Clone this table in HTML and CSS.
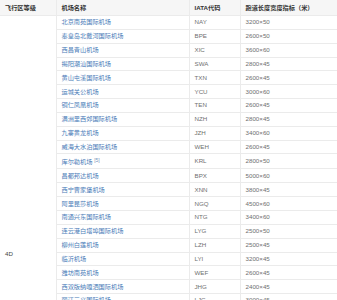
FILE: index.html
```
<!DOCTYPE html>
<html lang="zh-CN">

<head>
    <meta charset="UTF-8">
    <meta name="viewport" content="width=device-width, initial-scale=1.0">
    <title>4D级机场</title>
    <link rel="stylesheet" href="styles.css">
</head>

<body>
    <table class="tb">
        <colgroup>
            <col class="c1">
            <col class="c2">
            <col class="c3">
            <col class="c4">
        </colgroup>
        <thead>
            <tr>
                <th>飞行区等级</th>
                <th>机场名称</th>
                <th>IATA代码</th>
                <th>跑道长度宽度指标（米）</th>
            </tr>
        </thead>
        <tbody>
            <tr>
                <td class="level" rowspan="21">4D</td>
                <td><a href="#">北京南苑国际机场</a></td>
                <td class="code">NAY</td>
                <td class="num">3200×50</td>
            </tr>
            <tr><td><a href="#">秦皇岛北戴河国际机场</a></td><td class="code">BPE</td><td class="num">2600×50</td></tr>
            <tr><td><a href="#">西昌青山机场</a></td><td class="code">XIC</td><td class="num">3600×60</td></tr>
            <tr><td><a href="#">揭阳潮汕国际机场</a></td><td class="code">SWA</td><td class="num">2800×45</td></tr>
            <tr><td><a href="#">黄山屯溪国际机场</a></td><td class="code">TXN</td><td class="num">2600×45</td></tr>
            <tr><td><a href="#">运城关公机场</a></td><td class="code">YCU</td><td class="num">3000×60</td></tr>
            <tr><td><a href="#">铜仁凤凰机场</a></td><td class="code">TEN</td><td class="num">2600×45</td></tr>
            <tr><td><a href="#">满洲里西郊国际机场</a></td><td class="code">NZH</td><td class="num">2800×45</td></tr>
            <tr><td><a href="#">九寨黄龙机场</a></td><td class="code">JZH</td><td class="num">3400×60</td></tr>
            <tr><td><a href="#">威海大水泊国际机场</a></td><td class="code">WEH</td><td class="num">2600×45</td></tr>
            <tr><td><a href="#">库尔勒机场</a> <sup>[5]</sup></td><td class="code">KRL</td><td class="num">2800×50</td></tr>
            <tr><td><a href="#">昌都邦达机场</a></td><td class="code">BPX</td><td class="num">5000×60</td></tr>
            <tr><td><a href="#">西宁曹家堡机场</a></td><td class="code">XNN</td><td class="num">3800×45</td></tr>
            <tr><td><a href="#">阿里昆莎机场</a></td><td class="code">NGQ</td><td class="num">4500×60</td></tr>
            <tr><td><a href="#">南通兴东国际机场</a></td><td class="code">NTG</td><td class="num">3400×60</td></tr>
            <tr><td><a href="#">连云港白塔埠国际机场</a></td><td class="code">LYG</td><td class="num">2500×50</td></tr>
            <tr><td><a href="#">柳州白莲机场</a></td><td class="code">LZH</td><td class="num">2500×45</td></tr>
            <tr><td><a href="#">临沂机场</a></td><td class="code">LYI</td><td class="num">3200×45</td></tr>
            <tr><td><a href="#">潍坊南苑机场</a></td><td class="code">WEF</td><td class="num">2600×45</td></tr>
            <tr><td><a href="#">西双版纳嘎洒国际机场</a></td><td class="code">JHG</td><td class="num">2400×45</td></tr>
            <tr><td><a href="#">丽江三义国际机场</a></td><td class="code">LJG</td><td class="num">3000×45</td></tr>
        </tbody>
    </table>
</body>

</html>
```

FILE: styles.css
```
* {
    padding: 0;
    margin: 0;
}

body {
    background: #fff;
    font-family: "Liberation Sans", "Noto Sans CJK SC", sans-serif;
    font-size: 6.2px;
    color: #555;
}

.tb {
    width: 345px;
    table-layout: fixed;
    border-collapse: collapse;
}

.c1 {
    width: 56px;
}

.c2 {
    width: 133px;
}

.c3 {
    width: 51px;
}

.tb th,
.tb td {
    border: 1px solid #ebebeb;
    border-top: 0;
    padding: 0 5px;
    text-align: left;
    white-space: nowrap;
    overflow: hidden;
}

.tb tr > :first-child {
    border-left: 0;
}

.tb th {
    height: 15px;
    background: #f6f6f6;
    color: #333;
    font-weight: bold;
}

.tb td {
    height: 12.85px;
    line-height: 12px;
}

.tb a {
    color: #4a7cb8;
    text-decoration: none;
}

.tb sup {
    font-size: 5px;
    color: #7894bb;
    vertical-align: 2px;
}

.tb td.level {
    vertical-align: top;
    padding-top: 232px;
    background: #fff;
    color: #444;
}

.code,
.num {
    color: #707070;
}
```
